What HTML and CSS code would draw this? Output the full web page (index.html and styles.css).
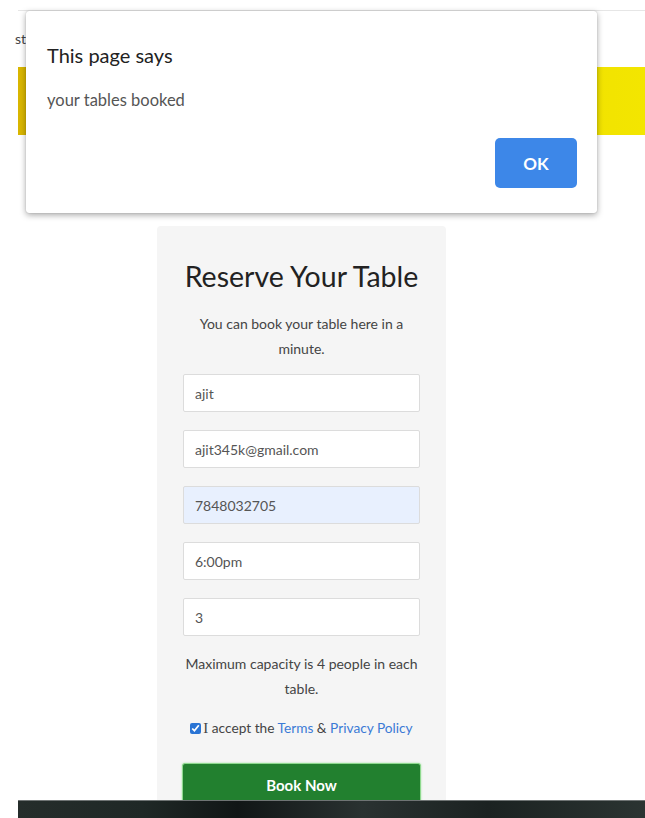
FILE: index.html
```html
<!DOCTYPE html>
<html>
<head>
<meta charset="utf-8">
<link rel="stylesheet" href="styles.css">
</head>
<body>
<div class="page">
  <header class="topbar">
    <span class="nav-text">st</span>
  </header>
  <div class="banner"></div>
  <main class="content">
    <section class="card">
      <h1 class="title">Reserve Your Table</h1>
      <p class="subtitle">You can book your table here in a minute.</p>
      <form class="form">
        <input class="field" type="text" value="ajit">
        <input class="field" type="text" value="ajit345k@gmail.com">
        <input class="field autofill" type="text" value="7848032705">
        <input class="field" type="text" value="6:00pm">
        <input class="field" type="text" value="3">
        <p class="note">Maximum capacity is 4 people in each table.</p>
        <label class="accept"><input class="check" type="checkbox" checked><span class="serif">I</span> accept the <a class="link">Terms</a> &amp; <a class="link">Privacy Policy</a></label>
        <button class="book" type="button">Book Now</button>
      </form>
    </section>
  </main>
</div>
<div class="footer-strip"></div>
<div class="dialog">
  <div class="dialog-title">This page says</div>
  <div class="dialog-msg">your tables booked</div>
  <div class="dialog-actions">
    <button class="ok" type="button">OK</button>
  </div>
</div>
</body>
</html>
```
FILE: styles.css
```css
* { box-sizing: border-box; }
html, body { margin: 0; padding: 0; }
body {
  background: #fff;
  font-family: Lato, "Open Sans", sans-serif;
  width: 645px;
  height: 818px;
  overflow: hidden;
  position: relative;
}
.page {
  padding-top: 10px;
}
.topbar {
  margin-left: 18px;
  height: 57px;
  border-top: 1px solid #e6e6e6;
  position: relative;
}
.nav-text {
  display: block;
  margin-left: -3px;
  padding-top: 19px;
  font-size: 14px;
  color: #444;
}
.banner {
  margin-left: 18px;
  height: 68px;
  background: linear-gradient(90deg, #d9b600 0%, #e8cf00 40%, #f3e600 100%);
}
.content {
  padding-top: 91px;
  padding-left: 157px;
}
.card {
  width: 289px;
  height: 600px;
  background: #f5f5f5;
  border-radius: 4px;
  padding: 33px 26px 0;
  text-align: center;
}
.title {
  margin: 0;
  font-size: 28.5px;
  font-weight: 400;
  line-height: 35px;
  color: #222;
}
.subtitle {
  margin: 17px 0 0;
  font-size: 14px;
  line-height: 25px;
  color: #444;
  padding: 0 10px;
}
.form {
  display: flex;
  flex-direction: column;
  margin-top: 13px;
}
.field {
  height: 38px;
  width: 237px;
  margin: 0 0 18px;
  border: 1px solid #dcdcdc;
  border-radius: 2px;
  background: #fff;
  padding: 0 11px;
  font-family: Lato, "Open Sans", sans-serif;
  font-size: 14px;
  color: #555;
}
.field.autofill {
  background: #e8f0fe;
}
.note {
  margin: -3px 0 0;
  font-size: 14px;
  line-height: 25px;
  color: #444;
}
.accept {
  display: block;
  margin-top: 14px;
  font-size: 13.7px;
  line-height: 25px;
  color: #444;
  white-space: nowrap;
  text-align: center;
}
.serif {
  font-family: "Liberation Serif", serif;
  font-size: 15px;
}
.check {
  width: 11px;
  height: 11px;
  margin: 0 2px 0 0;
  vertical-align: -1px;
  accent-color: #2a74d4;
}
.link {
  color: #3b7ad6;
}
.book {
  margin: 22px -1px 0;
  height: 44px;
  border: 1px solid #8fd98f;
  border-radius: 3px;
  background: #22802f;
  color: #fff;
  font-family: Lato, "Open Sans", sans-serif;
  font-size: 15px;
  font-weight: 700;
  padding-bottom: 2px;
  box-shadow: 0 0 2px #9be39b;
}
.footer-strip {
  position: absolute;
  left: 18px;
  right: 0;
  top: 800px;
  height: 18px;
  border-top: 1px solid #6f7474;
  background: linear-gradient(90deg, #252d2b 0%, #1f2826 20%, #111616 35%, #2a3231 55%, #1b2221 75%, #2b3432 100%);
}
.dialog {
  position: absolute;
  left: 26px;
  top: 11px;
  width: 571px;
  height: 202px;
  background: #fff;
  border-radius: 3px;
  box-shadow: 0 2px 6px rgba(0,0,0,0.35), 0 0 1px rgba(0,0,0,0.3);
  padding: 31px 20px 0 21px;
}
.dialog-title {
  font-size: 20px;
  line-height: 26px;
  color: #222;
}
.dialog-msg {
  margin-top: 21px;
  font-size: 16.5px;
  line-height: 22px;
  color: #555;
}
.dialog-actions {
  display: flex;
  justify-content: flex-end;
  margin-top: 27px;
}
.ok {
  width: 82px;
  height: 50px;
  border: none;
  border-radius: 5px;
  background: #3d87e8;
  color: #fff;
  font-family: Lato, "Open Sans", sans-serif;
  font-size: 17px;
  font-weight: 700;
}
```
